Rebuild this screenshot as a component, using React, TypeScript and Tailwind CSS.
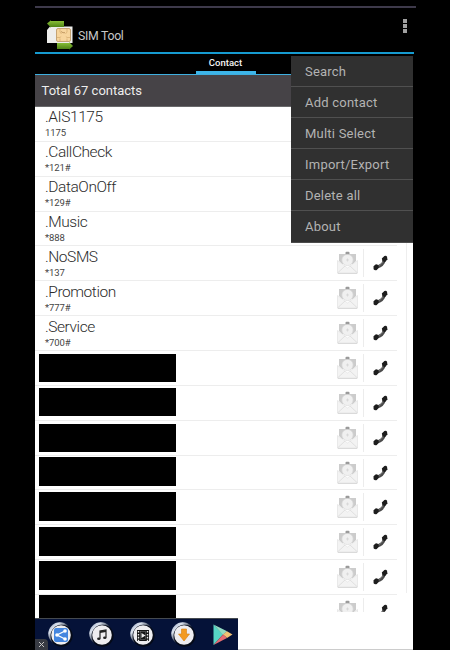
import React from 'react';

interface Contact {
    name: string;
    number: string;
}

const contacts: Contact[] = [
    { name: '.AIS1175', number: '1175' },
    { name: '.CallCheck', number: '*121#' },
    { name: '.DataOnOff', number: '*129#' },
    { name: '.Music', number: '*888' },
    { name: '.NoSMS', number: '*137' },
    { name: '.Promotion', number: '*777#' },
    { name: '.Service', number: '*700#' },
];

// Spacing above each hidden contact's block, and the block's height
const hiddenContacts: string[] = [
    'mt-[3px] h-[28px]',
    'mt-[2px] h-[28px]',
    'mt-[3px] h-[28px]',
    'mt-[1px] h-[29px]',
    'mt-[2px] h-[29px]',
    'mt-[2px] h-[29px]',
    'mt-[1px] h-[29px]',
    'mt-0 h-[30px]',
];

const menuItems: string[] = ['Search', 'Add contact', 'Multi Select', 'Import/Export', 'Delete all', 'About'];

const SimLogo: React.FC = () => (
    <svg width="28" height="30" viewBox="0 0 28 30" className="shrink-0">
        <defs>
            <linearGradient id="green" x1="0" y1="0" x2="0" y2="1">
                <stop offset="0" stopColor="#8fc63a" />
                <stop offset="1" stopColor="#487c12" />
            </linearGradient>
        </defs>
        <path d="M4 6.5h22.5V23H1V10z" fill="#eeeeec" />
        <path d="M1 3.5L5 .3v.7h13v6H5v.8z" fill="url(#green)" />
        <path d="M27 26l-4 3.7V29H11v-6h12v-1z" fill="url(#green)" />
        <rect x="10.5" y="8.5" width="14" height="13" rx="1.5" fill="#f7d59d" stroke="#b08a50" strokeWidth=".7" />
        <path d="M14 9v3l1.5 2M21 9v3l-1.5 2M14 21v-2.5M21 21v-2.5M11 17.5h3l1.2-1M24 17.5h-3l-1.2-1" fill="none" stroke="#cfa567" strokeWidth=".6" />
        <path d="M15 11.5l2 1.2h2" fill="none" stroke="#9e713a" strokeWidth=".6" />
    </svg>
);

const MailIcon: React.FC = () => (
    <svg width="21" height="24" viewBox="0 0 21 24" className="shrink-0">
        <path d="M2 3h17v7l-3 3H5l-3-3z" fill="#cccccc" />
        <rect x="8.5" y="0.8" width="4" height="3" rx="1" fill="#999" />
        <path d="M.5 9.5l10 7.5 10-7.5V22H.5z" fill="#f3f3f3" stroke="#e3e3e3" strokeWidth=".7" />
        <path d="M.5 22l7.5-7M20.5 22L13 15" stroke="#dadada" strokeWidth=".8" />
        <circle cx="10.5" cy="9" r="5.6" fill="#f0f0f0" stroke="#dadada" strokeWidth=".7" />
        <path d="M10.5 7.5v3M9 9h3" stroke="#d3d3d3" strokeWidth=".7" />
        <path d="M1 22.5h19" stroke="#d3d3d3" strokeWidth=".8" />
    </svg>
);

const PhoneIcon: React.FC = () => (
    <svg width="15" height="16" viewBox="0 0 15 16" className="shrink-0">
        <path d="M3.5 12.2C7.6 11.4 10.6 8.6 11.6 4.4" fill="none" stroke="#4a4a4a" strokeWidth="3" />
        <path d="M8.8 3.4L11.4 1q2-.8 2.6.7l.4 2.6-2 2.5q-2 .6-2.9-.6z" fill="#1d1d1d" />
        <path d="M.5 11.2l2.4-2q1.7 0 2.4 1.2l.5 2.3-2 2.3q-2.2.6-3.2-.8z" fill="#1d1d1d" />
        <path d="M6 10.8q2.9-1.5 4.2-4.4" fill="none" stroke="#888" strokeWidth=".6" />
    </svg>
);

const RowActions: React.FC = () => (
    <div className="flex h-[34px] w-[60px] items-start">
        <div className="h-[29px] w-[26px] pt-[5px]">
            <MailIcon />
        </div>
        <div className="mt-[3px] h-[28px] w-px bg-[#ececec]" />
        <div className="pt-[9px] pl-[9px]">
            <PhoneIcon />
        </div>
    </div>
);

const AdButton: React.FC<{ children: React.ReactNode }> = ({ children }) => (
    <svg width="25" height="25" viewBox="0 0 25 25" className="shrink-0">
        <defs>
            <linearGradient id="shine" x1="0" y1="0" x2=".7" y2=".7">
                <stop offset="0" stopColor="#8190af" />
                <stop offset=".35" stopColor="#dce3ef" />
                <stop offset=".8" stopColor="#071126" />
            </linearGradient>
        </defs>
        <circle cx="11.8" cy="11.8" r="11.5" fill="url(#shine)" />
        <circle cx="13.6" cy="13.8" r="11" fill="#050a18" />
        <circle cx="13" cy="13" r="9.8" fill="#eeedf0" />
        {children}
    </svg>
);

const AdBar: React.FC = () => (
    <div className="absolute bottom-0 left-[35px] flex h-[32px] w-[203px] items-start border-t border-[#454a50] bg-[#051238] pt-[3px] pl-[13px]">
        <div className="flex gap-[16px]">
            <AdButton>
                <rect x="6" y="6" width="14" height="14" rx="2" fill="#4485df" />
                <path d="M17 9l-8 4 8 4" fill="none" stroke="#fff" strokeWidth="1.3" />
                <circle cx="17" cy="9" r="1.8" fill="#fff" />
                <circle cx="9" cy="13" r="1.8" fill="#fff" />
                <circle cx="17" cy="17" r="1.8" fill="#fff" />
            </AdButton>
            <AdButton>
                <path d="M11 16.5V9l6-1v7.5" fill="none" stroke="#222" strokeWidth="1.2" />
                <path d="M11 9l6-1v2l-6 1z" fill="#222" />
                <ellipse cx="9.8" cy="16.7" rx="1.7" ry="1.3" fill="#222" />
                <ellipse cx="15.8" cy="15.7" rx="1.7" ry="1.3" fill="#222" />
            </AdButton>
            <AdButton>
                <rect x="7" y="8" width="12" height="11" fill="#151515" />
                <path d="M8.5 9v10M17.5 9v10" stroke="#eee" strokeWidth="1.4" strokeDasharray="1.6 1.3" />
                <rect x="10.3" y="9.6" width="5.4" height="7.8" fill="none" stroke="#777" strokeWidth=".5" />
                <path d="M11.5 11l4 2.5-4 2.5z" fill="#eee" />
            </AdButton>
            <AdButton>
                <path d="M10.5 7h5v5h3L13 19l-5.5-7h3z" fill="#f39a20" stroke="#d77d0b" strokeWidth=".6" />
            </AdButton>
        </div>
        <svg width="20" height="22" viewBox="0 0 20 22" className="mt-[2px] ml-[17px]">
            <path d="M.5.5v20.5L10 10.5z" fill="#56d5c5" />
            <path d="M.5.5l13.6 6.8L10 11z" fill="#92dbc2" />
            <path d="M14 7.3l5.5 3.2-5.5 3.5-4-3.5z" fill="#f1c173" />
            <path d="M.5 21L14 14l-4-3.5z" fill="#e56b72" />
        </svg>
        <div className="absolute bottom-0 left-0 flex h-[11px] w-[13px] items-center justify-center rounded-tr bg-[#383b43]">
            <svg width="7" height="7" viewBox="0 0 7 7">
                <path d="M1 1l5 5M6 1L1 6" stroke="#c8c8c8" strokeWidth="1" />
            </svg>
        </div>
    </div>
);

const App: React.FC = () => {
    return (
        <div className="relative h-[650px] w-[450px] overflow-hidden bg-black pl-[35px] font-['Roboto','Liberation_Sans',sans-serif]">
            <div className="flex h-full w-[378px] flex-col">
                <div className="mt-[6px] h-[2px] w-[381px] shrink-0 bg-[#3e3a4b]" />
                <header className="flex h-[46px] w-[379px] shrink-0 items-start border-b-2 border-[#169bd0] pt-[12px] pl-[11px]">
                    <SimLogo />
                    <h1 className="mt-[8px] ml-[4px] text-[12.3px] leading-4 tracking-[-0.3px] text-[#c7c7c7]">SIM Tool</h1>
                    <div className="mt-[-1px] mr-[7px] ml-auto flex flex-col gap-px">
                        <span className="h-[4px] w-[4px] bg-[#a0a0a0]" />
                        <span className="h-[4px] w-[4px] bg-[#a0a0a0]" />
                        <span className="h-[4px] w-[4px] bg-[#a0a0a0]" />
                    </div>
                </header>

                <nav className="flex h-[21px] shrink-0 justify-center border-b border-[#3eafe0] pl-[3px]">
                    <div className="h-[20px] w-[60px] border-b-[3px] border-[#3db5e9] pt-[2px] text-center text-[9.5px] leading-[14px] font-medium text-[#f4f4f4]">
                        Contact
                    </div>
                </nav>

                <div className="h-[32px] shrink-0 border-b border-[#69696b] bg-[#464347] pl-[6.5px] text-[13px] leading-[32px] text-[#eeeeee]">
                    Total 67 contacts
                </div>

                <main className="flex min-h-0 grow border-b border-[#cccccc] bg-white">
                    <div className="h-[505px] w-[362px] overflow-hidden">
                        {contacts.map(contact => (
                            <div key={contact.number} className="flex h-[34.87px] justify-between border-b border-[#ededed] pl-[10px]">
                                <div className="pt-[1.4px] text-[#2b2b2b]">
                                    <p className="text-[15.5px] leading-[19px] font-light tracking-[-0.43px]">{contact.name}</p>
                                    <p className="text-[9.5px] leading-[11px] tracking-[-0.1px] text-[#444444]">{contact.number}</p>
                                </div>
                                <RowActions />
                            </div>
                        ))}
                        {hiddenContacts.map((block, index) => (
                            <div key={index} className="flex h-[34.87px] justify-between border-b border-[#ededed] pl-[4px]">
                                <div className={`w-[137px] bg-black ${block}`} />
                                <RowActions />
                            </div>
                        ))}
                    </div>
                    <div className="ml-[9px] h-[486px] w-px bg-[#eeeeee]" />
                </main>
            </div>

            {/* Overflow menu */}
            <div className="absolute top-[56px] left-[291px] w-[122px] border-b border-[#4c4c4c] bg-[#303030]">
                {menuItems.map(item => (
                    <div key={item} className="h-[31px] border-b border-[#505050] pl-[14px] text-[13px] leading-[31px] tracking-[0.22px] text-[#b3b3b3] last:border-b-0">
                        {item}
                    </div>
                ))}
            </div>

            {/* Last contact continues behind the ad */}
            <div className="absolute top-[612px] left-[39px] h-[6px] w-[137px] bg-black" />
            <AdBar />
        </div>
    );
};

export default App;
